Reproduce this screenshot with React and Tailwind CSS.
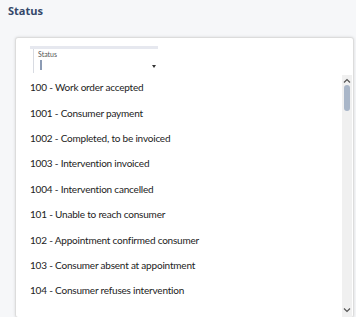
import React from 'react';

const statuses = [
  '100 - Work order accepted',
  '1001 - Consumer payment',
  '1002 - Completed, to be invoiced',
  '1003 - Intervention invoiced',
  '1004 - Intervention cancelled',
  '101 - Unable to reach consumer',
  '102 - Appointment confirmed consumer',
  '103 - Consumer absent at appointment',
  '104 - Consumer refuses intervention',
];

function ScrollBar() {
  return (
    <div className="w-[10px] mr-[1px] bg-[#f0f0f0] flex flex-col items-center">
      <svg width="10" height="8" viewBox="0 0 10 8" className="mt-[2px]">
        <path d="M2 5.5 L5 2.5 L8 5.5" fill="none" stroke="#555" strokeWidth="1.2" />
      </svg>
      <div className="w-[6px] h-[26px] rounded-full bg-[#a9b6c8]" />
      <div className="flex-1" />
      <svg width="10" height="8" viewBox="0 0 10 8" className="mb-[3px]">
        <path d="M2 2.5 L5 5.5 L8 2.5" fill="none" stroke="#555" strokeWidth="1.2" />
      </svg>
    </div>
  );
}

export default function App() {
  return (
    <div
      className="w-[356px] h-[317px] overflow-hidden bg-[#f6f7f9] text-[#222]"
      style={{ fontFamily: 'Lato, "Open Sans", sans-serif' }}
    >
      <div
        className="pl-[8px] pt-[3px] h-[37px] text-[11px] font-bold text-[#34486a]"
        style={{ fontFamily: '"Open Sans", sans-serif' }}
      >
        Status
      </div>

      <div className="ml-[15px] w-[339px] bg-white border border-[#dcdcdc] rounded-[3px] shadow-[0_0_3px_rgba(0,0,0,0.12)]">
        {/* search input */}
        <div className="pl-[14px] pt-[8px] h-[37px]">
          <div className="relative w-[128px] h-[27px] border-t-[3px] border-[#e6e8ef]">
            <div className="absolute left-[3px] top-0 bottom-0 border-l border-[#d8dbe2]" />
            <div className="pl-[8px] pt-[1px] text-[7px] leading-[9px] text-[#555]">Status</div>
            <div className="ml-[10px] mt-[1px] w-[2px] h-[10px] bg-[#8c9bb4]" />
            <div className="absolute right-[2px] bottom-[5px] w-0 h-0 border-l-[2px] border-r-[2px] border-t-[3px] border-l-transparent border-r-transparent border-t-[#333]" />
          </div>
        </div>

        {/* options */}
        <div className="flex h-[242px] overflow-hidden">
          <div className="flex-1">
            {statuses.map((s) => (
              <div key={s} className="h-[25.4px] flex items-center pl-[14px] text-[10px] tracking-[-0.2px]">
                {s}
              </div>
            ))}
          </div>
          <ScrollBar />
        </div>
      </div>
    </div>
  );
}
